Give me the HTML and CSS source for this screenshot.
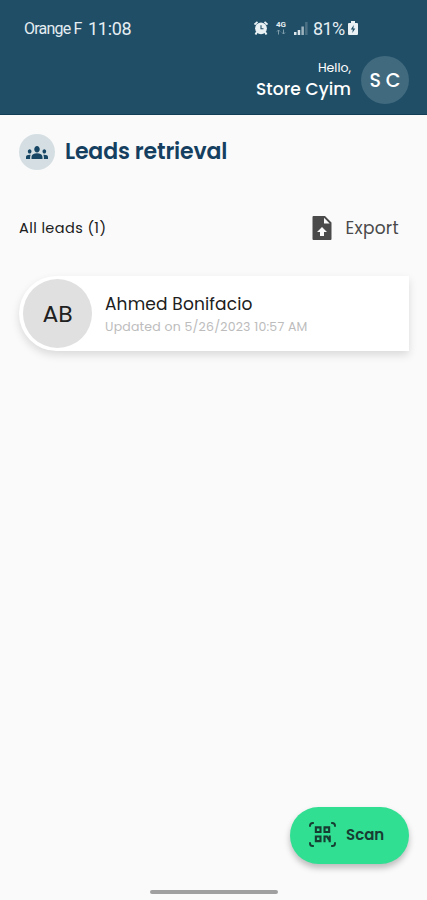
FILE: index.html
```html
<!DOCTYPE html>
<html lang="en">
<head>
<meta charset="utf-8">
<meta name="viewport" content="width=device-width, initial-scale=1">
<title>Leads retrieval</title>
<link rel="stylesheet" href="styles.css">
</head>
<body>
<header class="header">
  <div class="status">
    <span class="carrier">Orange F</span>
    <span class="clock">11:08</span>
    <div class="indicators">
      <svg class="alarm" viewBox="0 0 14 14"><path d="M.5 3.500L3.500 .8M13.500 3.500L10.500 .8" stroke="#eaf1f5" stroke-width="1.800"/><path d="M3 11l-1.500 2.500M11 11l1.500 2.500" stroke="#eaf1f5" stroke-width="2"/><circle cx="7" cy="7.300" r="5.900" fill="#eaf1f5"/><path d="M7 4.200v3.500h2.500" fill="none" stroke="#1f4e66" stroke-width="1.100"/></svg>
      <div class="network"><span>4G</span><svg viewBox="0 0 10 6"><path d="M2.500 5.500V1M1 2.500L2.500 1 4 2.500M7.500 .5V5M6 3.500L7.500 5 9 3.500" fill="none" stroke="#7f9cab" stroke-width="1"/></svg></div>
      <svg class="signal" viewBox="0 0 14 13"><path d="M0 10h2.500v3H0zM3.700 8h2.500v5H3.700z" fill="#dce6eb"/><path d="M7.400 4.500h2.500V13H7.400z" fill="#9db3be"/><path d="M11.100 0h2.500v13h-2.500z" fill="#4b7084"/></svg>
      <span class="percent">81%</span>
      <svg class="battery" viewBox="0 0 10 14"><path d="M3 0h4v2h2q1 0 1 1v10q0 1-1 1H1q-1 0-1-1V3q0-1 1-1h2z" fill="#eaf1f5"/><path d="M5.800 4L2.800 8.500h2L4.300 12l3-4.500h-2z" fill="#1f4e66"/></svg>
    </div>
  </div>
  <div class="user">
    <div class="greeting"><span class="hello">Hello,</span><span class="name">Store Cyim</span></div>
    <div class="avatar">S C</div>
  </div>
</header>
<main class="main">
  <div class="heading">
    <div class="badge"><svg viewBox="0 5 24 14" preserveAspectRatio="none"><path fill="#164663" d="M12 12.750c1.630 0 3.070.390 4.240.900 1.080.480 1.760 1.560 1.760 2.730V18H6v-1.610c0-1.180.680-2.260 1.760-2.730 1.170-.520 2.610-.910 4.240-.910zM4 13c1.100 0 2-.900 2-2s-.900-2-2-2-2 .900-2 2 .900 2 2 2zm1.130 1.100c-.370-.060-.740-.100-1.130-.100-.990 0-1.930.210-2.780.580C.480 14.900 0 15.620 0 16.430V18h4.500v-1.610c0-.830.230-1.610.630-2.290zM20 13c1.100 0 2-.900 2-2s-.900-2-2-2-2 .900-2 2 .900 2 2 2zm4 3.430c0-.810-.480-1.530-1.220-1.850-.850-.370-1.790-.580-2.780-.580-.390 0-.760.040-1.130.100.400.680.630 1.460.630 2.290V18H24v-1.570zM12 6c1.660 0 3 1.340 3 3s-1.340 3-3 3-3-1.340-3-3 1.340-3 3-3z"/></svg></div>
    <h1 class="title">Leads retrieval</h1>
  </div>
  <div class="toolbar">
    <span class="count">All leads (1)</span>
    <div class="export">
      <svg viewBox="0 0 19 24"><path fill="#4a4a4a" fill-rule="evenodd" d="M1 0h11.500L19 6.500V23q0 1-1 1H1q-1 0-1-1V1q0-1 1-1zM11.500 1.800V7.500h5.700zM9.500 11L4.500 16H7.500v4h4v-4h3z"/></svg>
      <span>Export</span>
    </div>
  </div>
  <article class="card">
    <div class="initials">AB</div>
    <div class="details"><span class="person">Ahmed Bonifacio</span><span class="updated">Updated on 5/26/2023 10:57 AM</span></div>
  </article>
</main>
<footer class="footer">
  <div class="scan">
    <svg viewBox="0 0 28 26" fill="none" stroke="#173d32"><path stroke-width="2" d="M1 5V4q0-3 3-3h1M23 1h1q3 0 3 3v1M27 21v1q0 3-3 3h-1M5 25H4q-3 0-3-3v-1"/><path stroke-width="2.200" d="M7.100 5.600h4.800v4.800H7.100zM16.100 5.600h4.800v4.800h-4.800zM7.100 15.100h4.800v4.800H7.100z"/><path stroke-width="2.200" d="M16.100 21v-5.900h2.500l2.300 3.400M21.500 14v7"/></svg>
    <span>Scan</span>
  </div>
  <div class="home"></div>
</footer>
</body>
</html>
```
FILE: styles.css
```css
* { box-sizing: border-box; }
body {
  margin: 0;
  height: 900px;
  display: flex;
  flex-direction: column;
  background: #fafafa;
  font-family: Poppins, Inter, sans-serif;
  color: #202020;
  white-space: nowrap;
  overflow: hidden;
}
svg { display: block; flex: none; }
.header { height: 115px; background: #1f4e66; border-bottom: 1px solid #123d55; color: #fff; }
.status {
  height: 56px;
  padding: 0 69px 0 24px;
  display: flex;
  align-items: center;
  font-family: Roboto, sans-serif;
  color: #e5edf2;
}
.carrier { width: 64px; font-size: 16px; letter-spacing: -0.8px; }
.clock { font-size: 18px; letter-spacing: -0.3px; }
.indicators { margin-left: auto; display: flex; align-items: center; }
.alarm { width: 14px; height: 14px; margin-right: 8px; }
.network { width: 11px; margin-right: 7px; font-size: 8px; font-weight: 700; line-height: 8px; }
.network svg { width: 10px; height: 6px; }
.signal { width: 14px; height: 13px; margin-right: 5px; }
.percent { width: 35px; font-size: 18px; letter-spacing: -0.6px; }
.battery { width: 10px; height: 14px; }
.user { height: 48px; padding-right: 18px; display: flex; align-items: center; justify-content: flex-end; gap: 10px; }
.greeting { display: flex; flex-direction: column; align-items: flex-end; padding-bottom: 3px; }
.hello { font-size: 12.5px; line-height: 21px; }
.name { font-size: 17px; line-height: 23px; font-weight: 500; letter-spacing: 0.1px; }
.avatar {
  width: 48px;
  height: 48px;
  border-radius: 50%;
  background: #416a7e;
  display: grid;
  place-items: center;
  font-size: 19px;
  font-weight: 500;
}
.main { padding: 19px 18px 0 19px; }
.heading { height: 36px; display: flex; align-items: center; gap: 10px; }
.badge { width: 36px; height: 36px; border-radius: 50%; background: #d5dfe3; display: grid; place-items: center; }
.badge svg { width: 22px; height: 15px; }
.title { margin: 0; padding-bottom: 2px; font-size: 22px; font-weight: 600; color: #153f60; letter-spacing: -0.15px; }
.toolbar { margin-top: 41px; height: 34px; padding: 0 10px 0 0; display: flex; align-items: center; justify-content: space-between; }
.count { font-size: 14.5px; letter-spacing: 0.4px; }
.export { display: flex; align-items: center; gap: 13px; font-size: 17px; letter-spacing: 0.3px; color: #4a4a4a; }
.export svg { width: 20px; height: 24px; }
.card {
  margin-top: 31px;
  height: 75px;
  padding: 0 0 1px 4px;
  display: flex;
  align-items: center;
  gap: 13px;
  background: #fff;
  border-radius: 38px 0 0 38px;
  box-shadow: 0 4px 8px rgba(0, 0, 0, 0.13);
}
.initials {
  width: 69px;
  height: 69px;
  border-radius: 50%;
  background: #e0e0e0;
  display: grid;
  place-items: center;
  font-size: 23.5px;
}
.details { display: flex; flex-direction: column; padding-top: 4px; }
.person { font-size: 17px; line-height: 24px; letter-spacing: 0.15px; }
.updated { font-size: 12.5px; line-height: 22px; color: #bcbcbc; letter-spacing: 0.2px; }
.footer { margin-top: auto; height: 93px; display: flex; flex-direction: column; }
.scan {
  width: 119px;
  height: 57px;
  margin: 0 18px 0 auto;
  padding: 0 0 2px 19px;
  border-radius: 29px;
  background: #31df93;
  box-shadow: 0 4px 6px rgba(0, 0, 0, 0.25);
  display: flex;
  align-items: center;
  gap: 10px;
  font-size: 15px;
  font-weight: 600;
  color: #173d32;
}
.scan svg { width: 27px; height: 25px; }
.home { width: 128px; height: 4px; margin: 26px auto 0; border-radius: 2px; background: #a0a0a0; }
```
